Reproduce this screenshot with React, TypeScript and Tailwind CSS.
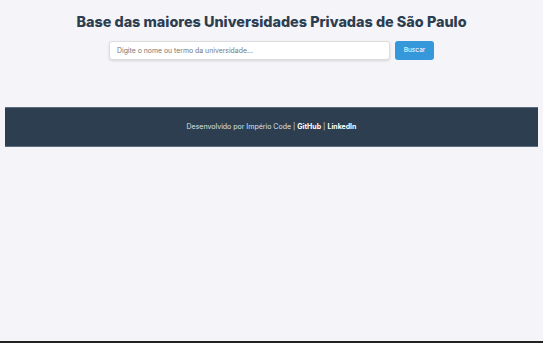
export default function App() {
  return (
    <div className="flex h-[343px] flex-col bg-[#f4f4f9] font-['Inter',sans-serif]">
      <div className="flex-1 px-[5px]">
        <header className="flex flex-col items-center pt-[12px]">
          <h1 className="text-[14.4px] font-extrabold leading-[20px] text-[#2c3e50]">
            Base das maiores Universidades Privadas de São Paulo
          </h1>
          <div className="mt-[9px] flex items-center gap-[5px]">
            <input
              type="text"
              placeholder="Digite o nome ou termo da universidade..."
              className="h-[19px] w-[281px] rounded-[3px] border border-[#dddddd] bg-white px-[7px] text-[6.9px] text-[#555] shadow-sm outline-none placeholder:text-[#777]"
            />
            <button className="h-[19px] w-[39px] rounded-[3px] bg-[#3498db] text-[6.6px] text-white">
              Buscar
            </button>
          </div>
        </header>

        <footer className="mt-[47px] flex h-[40px] items-center justify-center border-y border-[#5d6d7e] bg-[#2c3e50] text-[7px] text-[#dde2e7]">
          <span>Desenvolvido por Império Code</span>
          <span className="mx-[2px]">|</span>
          <a className="font-bold text-white">GitHub</a>
          <span className="mx-[2px]">|</span>
          <a className="font-bold text-white">LinkedIn</a>
        </footer>
      </div>
      <div className="h-[2px] bg-[#222]" />
    </div>
  );
}
